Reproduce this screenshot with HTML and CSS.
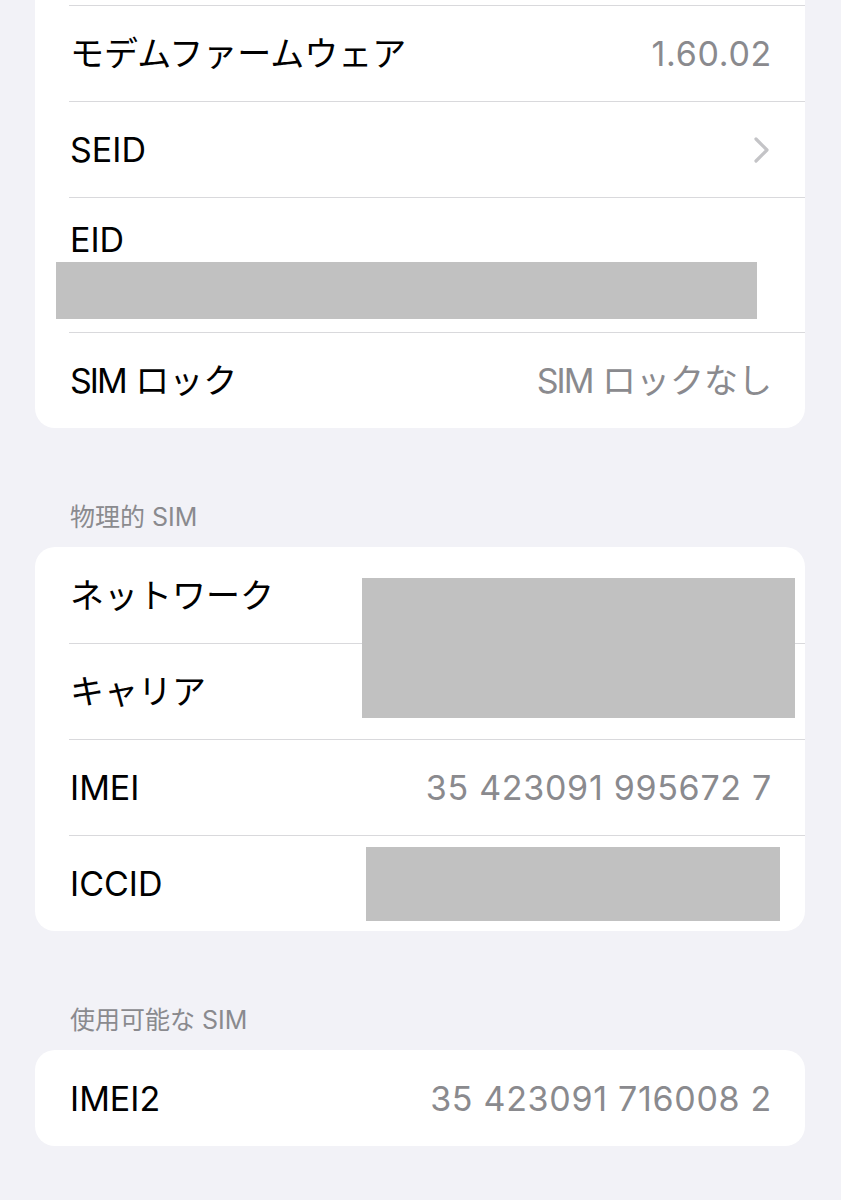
FILE: index.html
```html
<!DOCTYPE html>
<html lang="ja">
<head>
  <meta charset="UTF-8">
  <title>情報</title>
  <link rel="stylesheet" href="styles.css">
</head>
<body>

<div class="page">

  <div class="card card-cut">
    <div class="stub"></div>
    <div class="row">
      <span class="label">モデムファームウェア</span>
      <span class="value num">1.60.02</span>
    </div>
    <div class="row">
      <span class="label">SEID</span>
      <svg class="chevron" width="18" height="28" viewBox="0 0 18 28">
        <path d="M3 3 L14 14 L3 25" fill="none" stroke="#c4c4c7" stroke-width="3.2" stroke-linecap="round" stroke-linejoin="round"/>
      </svg>
    </div>
    <div class="row row-eid">
      <span class="label">EID</span>
      <div class="redact redact-eid"></div>
    </div>
    <div class="row">
      <span class="label"><span class="tight">SIM</span> ロック</span>
      <span class="value"><span class="tight">SIM</span> ロックなし</span>
    </div>
  </div>

  <div class="section-title">物理的 SIM</div>
  <div class="card">
    <div class="row">
      <span class="label">ネットワーク</span>
    </div>
    <div class="row">
      <span class="label">キャリア</span>
    </div>
    <div class="row">
      <span class="label">IMEI</span>
      <span class="value num">35 423091 995672 7</span>
    </div>
    <div class="row">
      <span class="label">ICCID</span>
      <div class="redact redact-iccid"></div>
    </div>
    <div class="redact redact-carrier"></div>
  </div>

  <div class="section-title">使用可能な SIM</div>
  <div class="card">
    <div class="row">
      <span class="label">IMEI2</span>
      <span class="value num">35 423091 716008 2</span>
    </div>
  </div>

</div>

</body>
</html>
```

FILE: styles.css
```css
body {
  margin: 0;
  background: #f2f2f7;
  font-family: Inter, "Noto Sans CJK JP", sans-serif;
  color: #000;
}
.page {
  padding: 0 36px 60px 35px;
}
.card {
  position: relative;
  background: #fff;
  border-radius: 20px;
  overflow: hidden;
}
.card-cut {
  border-radius: 0 0 20px 20px;
}
.stub {
  height: 5px;
}
.row {
  box-sizing: border-box;
  height: 96px;
  margin-left: 34px;
  padding: 0 33px 0 1px;
  display: flex;
  align-items: center;
  justify-content: space-between;
  border-top: 1px solid #d9d9dc;
  font-size: 34px;
  line-height: 41px;
}
.row:first-child {
  border-top: none;
}
.label {
  white-space: nowrap;
}
.value {
  color: #8a8a8e;
  white-space: nowrap;
}
.num {
  letter-spacing: 0.7px;
}
.tight {
  letter-spacing: -2px;
}
.chevron {
  margin-right: 1px;
}
.row-eid {
  height: 135px;
  flex-direction: column;
  align-items: flex-start;
  justify-content: flex-start;
  padding-top: 21px;
}
.redact {
  background: #c1c1c1;
}
.redact-eid {
  margin: 2px 0 0 -14px;
  width: 701px;
  height: 57px;
}
.redact-iccid {
  width: 414px;
  height: 74px;
  margin-right: -8px;
}
.redact-carrier {
  position: absolute;
  left: 327px;
  top: 31px;
  width: 433px;
  height: 140px;
}
.section-title {
  margin: 74px 35px 15px;
  font-size: 25px;
  line-height: 30px;
  color: #8a8a8e;
}
```
